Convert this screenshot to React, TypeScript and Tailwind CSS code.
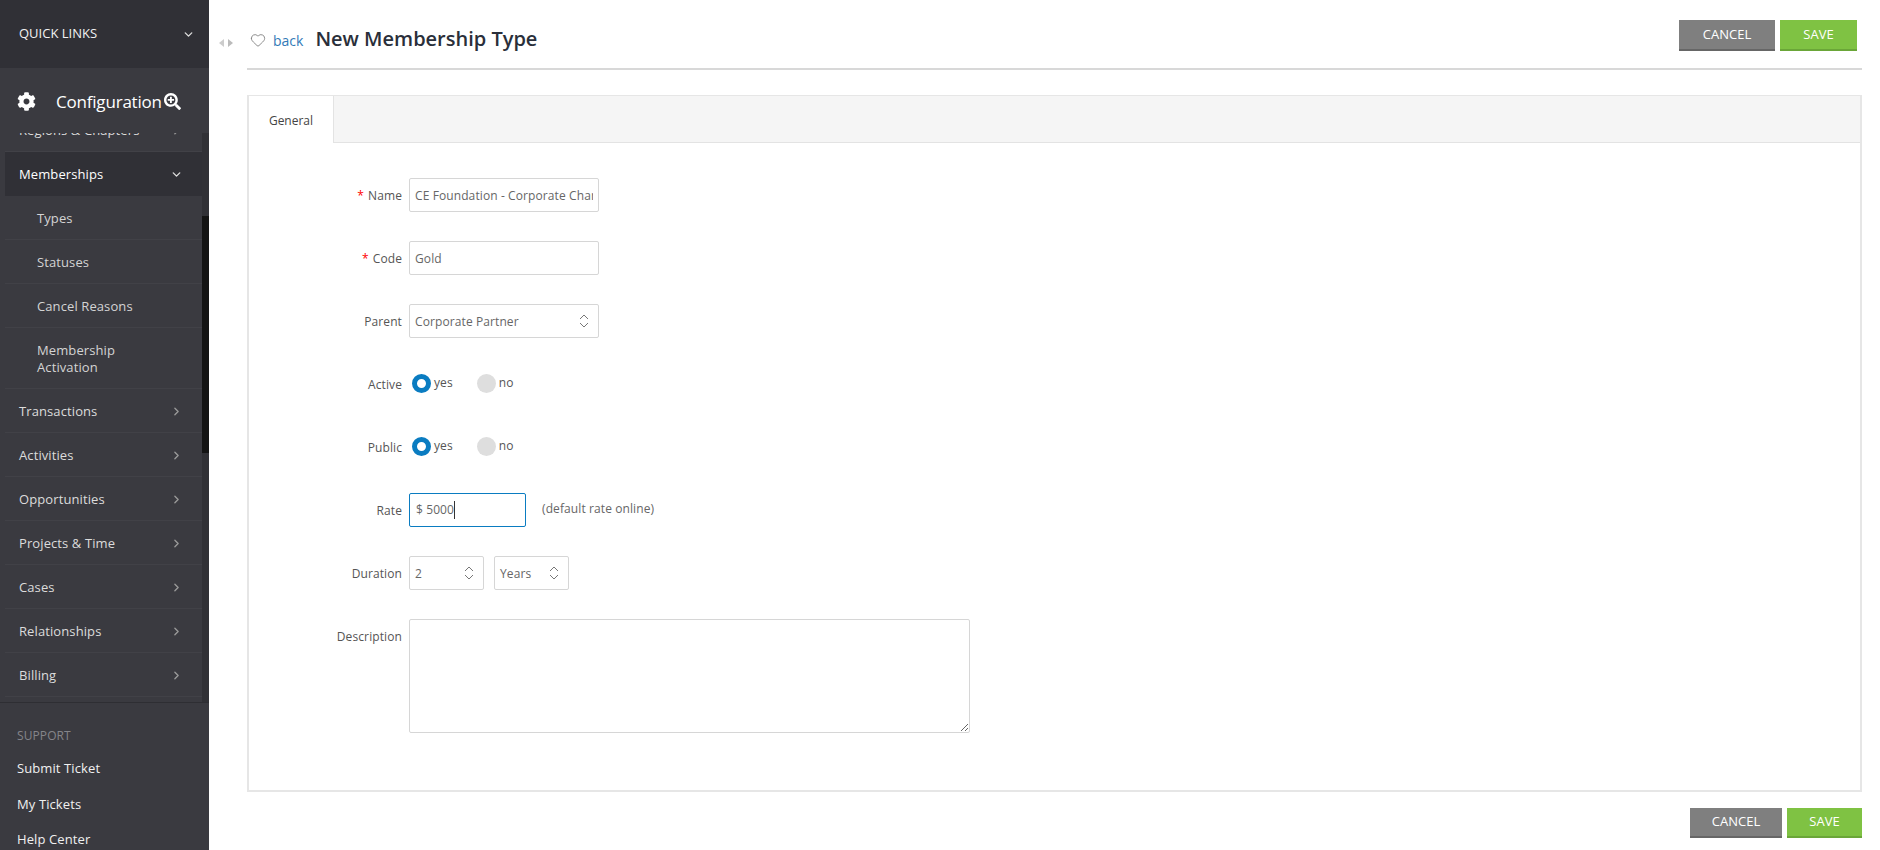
import { ChevronDown, ChevronRight, Heart } from 'lucide-react';
import { FaCog, FaSearchPlus } from 'react-icons/fa';

const UpDown = () => (
  <svg width="10" height="14" viewBox="0 0 10 14" fill="none" stroke="#777" strokeWidth="1" className="shrink-0">
    <path d="M1 5 L5 1 L9 5" />
    <path d="M1 9 L5 13 L9 9" />
  </svg>
);

const NavRow = ({ label, open }: { label: string; open?: boolean }) => (
  <div className={`h-[44px] flex items-center justify-between pl-[14px] pr-[19px] pt-[2px] border-b border-[#414147] text-[13px] tracking-[0.1px] ${open ? 'bg-[#303036] text-white border-transparent' : 'text-[#dcdcdc]'}`}>
    <span>{label}</span>
    {open ? <ChevronDown size={13} strokeWidth={2.5} className="text-[#ddd]" /> : <ChevronRight size={13} strokeWidth={2.5} className="text-[#999]" />}
  </div>
);

const SubRow = ({ label, tall }: { label: React.ReactNode; tall?: boolean }) => (
  <div className={`flex items-center pl-[32px] pr-6 pt-[2px] border-b border-[#414147] text-[13px] tracking-[0.1px] leading-[17px] text-[#d4d4d4] ${tall ? 'h-[61px]' : 'h-[44px]'}`}>
    {label}
  </div>
);

const FormRow = ({ label, required, children, top }: { label: string; required?: boolean; children: React.ReactNode; top?: boolean }) => (
  <div className={`flex tracking-[0.1px] ${top ? 'items-start' : 'items-center'}`}>
    <div className={`w-[153px] text-right text-[12px] text-[#555] ${top ? 'pt-[9px]' : 'pt-[2px]'}`}>
      {required && <span className="text-[#f00] mr-[4px]">*</span>}
      {label}
    </div>
    <div className="ml-[7px] flex items-center">{children}</div>
  </div>
);

const Radio = ({ on, label }: { on?: boolean; label: string }) => (
  <div className="flex items-center">
    <span className={on ? 'w-[19px] h-[19px] rounded-full border-[5px] border-[#0a7cc1] bg-white' : 'w-[19px] h-[19px] rounded-full bg-[#dedede]'} />
    <span className="ml-[3px] pb-[1px] text-[12px] text-[#555]">{label}</span>
  </div>
);

const YesNo = () => (
  <div className="h-[34px] pb-[2px] flex items-center gap-[24px] pl-[3px]">
    <Radio on label="yes" />
    <Radio label="no" />
  </div>
);

const SelectBox = ({ value, width }: { value: string; width: string }) => (
  <div className={`${width} h-[34px] border border-[#d6d6d6] rounded-[2px] pl-[5px] pr-[9px] flex items-center justify-between text-[12px] text-[#666]`}>
    <span className="pt-[1px]">{value}</span>
    <UpDown />
  </div>
);

const Buttons = ({ cancel, save, height }: { cancel: string; save: string; height: string }) => (
  <div className="flex gap-[5px] text-[13px] text-white">
    <button className={`${cancel} ${height} bg-[#7f7f7f] border-b-2 border-[#666]`}>CANCEL</button>
    <button className={`${save} ${height} bg-[#7fc243] border-b-2 border-[#6aa638]`}>SAVE</button>
  </div>
);

export default function App() {
  return (
    <div className="flex h-[850px] overflow-hidden bg-white font-['Open_Sans',sans-serif]">
      <aside className="w-[209px] shrink-0 flex flex-col bg-[#3a3a40]">
        <div className="h-[68px] shrink-0 bg-[#303036] flex items-center justify-between pl-[19px] pr-[14px] text-[13px] text-[#f2f2f2]">
          <span>QUICK LINKS</span>
          <ChevronDown size={13} strokeWidth={2.5} className="text-[#ddd]" />
        </div>
        <div className="h-[65px] shrink-0 flex items-center pl-[17px] pt-[2px] text-white relative z-10 bg-[#3a3a40]">
          <FaCog size={19} />
          <span className="ml-[20px] text-[17px] tracking-[-0.2px]">Configuration</span>
          <FaSearchPlus size={17} className="ml-[2px]" />
        </div>
        <div className="h-[570px] shrink-0 flex overflow-hidden border-b border-[#2e2e33]">
          <div className="w-[202px] pl-[5px] -mt-[25px]">
            <NavRow label="Regions & Chapters" />
            <NavRow label="Memberships" open />
            <SubRow label="Types" />
            <SubRow label="Statuses" />
            <SubRow label="Cancel Reasons" />
            <SubRow label={<span>Membership<br />Activation</span>} tall />
            <NavRow label="Transactions" />
            <NavRow label="Activities" />
            <NavRow label="Opportunities" />
            <NavRow label="Projects & Time" />
            <NavRow label="Cases" />
            <NavRow label="Relationships" />
            <NavRow label="Billing" />
          </div>
          <div className="w-[7px] bg-[#313136]">
            <div className="mt-[83px] h-[237px] bg-[#141414]" />
          </div>
        </div>
        <div className="pl-[17px] pt-[24px] text-[13px] tracking-[0.1px] text-[#f0f0f0]">
          <div className="text-[12px] text-[#85858a] leading-[18px]">SUPPORT</div>
          <div className="mt-[14px] leading-[18px]">Submit Ticket</div>
          <div className="mt-[18px] leading-[18px]">My Tickets</div>
          <div className="mt-[17px] leading-[18px]">Help Center</div>
        </div>
      </aside>

      <main className="flex-1 min-w-0 pl-[38px] pr-[18px]">
        <header className="h-[70px] border-b-2 border-[#d8d8d8] flex items-start justify-between pl-[1px] pr-[5px]">
          <div className="flex items-center h-[40px] mt-[19px] relative">
            <div className="absolute -left-[29px] top-[20px] flex gap-[4px]">
              <span className="w-0 h-0 border-y-[4px] border-y-transparent border-r-[5px] border-r-[#ccc]" />
              <span className="w-0 h-0 border-y-[4px] border-y-transparent border-l-[5px] border-l-[#bbb]" />
            </div>
            <Heart size={16} strokeWidth={1.25} className="ml-[2px] text-[#777] mt-[2px]" />
            <span className="ml-[7px] text-[14px] text-[#337ab7] mt-[2px]">back</span>
            <h1 className="ml-[12px] text-[20px] font-semibold text-[#2a2f3a]">New Membership Type</h1>
          </div>
          <div className="mt-[20px]">
            <Buttons cancel="w-[96px]" save="w-[77px]" height="h-[31px]" />
          </div>
        </header>

        <section className="mt-[25px] h-[697px] border-2 border-[#e6e6e6] border-t-[1px]">
          <div className="h-[47px] bg-[#f5f5f5] border-b border-[#e3e3e3] flex">
            <div className="w-[85px] h-[47px] bg-white border-r border-[#e3e3e3] flex items-center justify-center text-[12px] text-[#444] pt-[3px]">General</div>
          </div>
          <div className="pt-[35px] flex flex-col gap-[29px]">
            <FormRow label="Name" required>
              <input readOnly value="CE Foundation - Corporate Charter" className="w-[190px] h-[34px] border border-[#d6d6d6] rounded-[2px] px-[5px] pt-[1px] text-[12px] text-[#666] outline-none" />
            </FormRow>
            <FormRow label="Code" required>
              <input readOnly value="Gold" className="w-[190px] h-[34px] border border-[#d6d6d6] rounded-[2px] px-[5px] pt-[1px] text-[12px] text-[#666] outline-none" />
            </FormRow>
            <FormRow label="Parent">
              <SelectBox value="Corporate Partner" width="w-[190px]" />
            </FormRow>
            <FormRow label="Active"><YesNo /></FormRow>
            <FormRow label="Public"><YesNo /></FormRow>
            <FormRow label="Rate">
              <div className="w-[117px] h-[34px] border border-[#0a7cc1] rounded-[2px] pl-[6px] flex items-center text-[12px] text-[#666]">
                <span className="border-r border-[#333] leading-[18px]">$ 5000</span>
              </div>
              <span className="ml-[16px] pb-[2px] text-[12px] text-[#666]">(default rate online)</span>
            </FormRow>
            <FormRow label="Duration">
              <SelectBox value="2" width="w-[75px]" />
              <div className="ml-[10px]"><SelectBox value="Years" width="w-[75px]" /></div>
            </FormRow>
            <FormRow label="Description" top>
              <textarea readOnly className="block w-[561px] h-[114px] border border-[#d6d6d6] rounded-[2px] outline-none" />
            </FormRow>
          </div>
        </section>

        <div className="mt-[16px] flex justify-end">
          <Buttons cancel="w-[92px]" save="w-[75px]" height="h-[30px]" />
        </div>
      </main>
    </div>
  );
}
